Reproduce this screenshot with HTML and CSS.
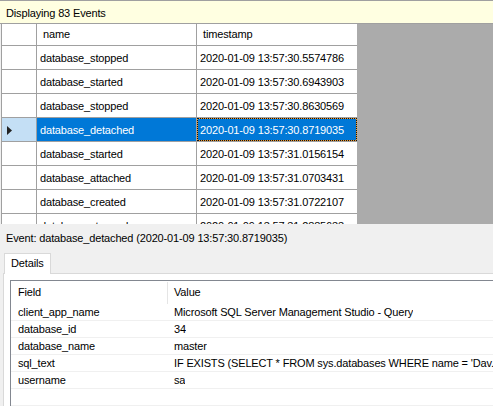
FILE: index.html
```html
<!DOCTYPE html>
<html lang="en">
<head>
    <meta charset="UTF-8">
    <title>Displaying 83 Events</title>
    <link rel="stylesheet" href="styles.css">
</head>
<body>
    <!-- 状态栏 -->
    <div class="status">Displaying 83 Events</div>

    <!-- 事件列表 -->
    <div class="events">
        <div class="row head">
            <div class="rh"></div>
            <div class="c name">name</div>
            <div class="c ts">timestamp</div>
        </div>
        <div class="row">
            <div class="rh"></div>
            <div class="c name">database_stopped</div>
            <div class="c ts">2020-01-09 13:57:30.5574786</div>
        </div>
        <div class="row">
            <div class="rh"></div>
            <div class="c name">database_started</div>
            <div class="c ts">2020-01-09 13:57:30.6943903</div>
        </div>
        <div class="row">
            <div class="rh"></div>
            <div class="c name">database_stopped</div>
            <div class="c ts">2020-01-09 13:57:30.8630569</div>
        </div>
        <div class="row sel">
            <div class="rh">
                <svg class="arrow" width="5" height="9" viewBox="0 0 5 9"><polygon points="0,0 5,4.5 0,9" fill="#222"/></svg>
            </div>
            <div class="c name">database_detached</div>
            <div class="c ts">2020-01-09 13:57:30.8719035</div>
        </div>
        <div class="row">
            <div class="rh"></div>
            <div class="c name">database_started</div>
            <div class="c ts">2020-01-09 13:57:31.0156154</div>
        </div>
        <div class="row">
            <div class="rh"></div>
            <div class="c name">database_attached</div>
            <div class="c ts">2020-01-09 13:57:31.0703431</div>
        </div>
        <div class="row">
            <div class="rh"></div>
            <div class="c name">database_created</div>
            <div class="c ts">2020-01-09 13:57:31.0722107</div>
        </div>
        <div class="row">
            <div class="rh"></div>
            <div class="c name">database_stopped</div>
            <div class="c ts">2020-01-09 13:57:31.2885633</div>
        </div>
    </div>

    <!-- 详情 -->
    <div class="detail">
        <div class="event">Event: database_detached (2020-01-09 13:57:30.8719035)</div>
        <div class="tabs">
            <div class="tab">Details</div>
        </div>
        <div class="tabpage">
            <div class="list">
                <div class="lrow lhead">
                    <div class="f">Field</div>
                    <div class="v">Value</div>
                </div>
                <div class="lrow">
                    <div class="f">client_app_name</div>
                    <div class="v">Microsoft SQL Server Management Studio - Query</div>
                </div>
                <div class="lrow">
                    <div class="f">database_id</div>
                    <div class="v">34</div>
                </div>
                <div class="lrow">
                    <div class="f">database_name</div>
                    <div class="v">master</div>
                </div>
                <div class="lrow">
                    <div class="f">sql_text</div>
                    <div class="v">IF EXISTS (SELECT * FROM sys.databases WHERE name = 'Dav.</div>
                </div>
                <div class="lrow">
                    <div class="f">username</div>
                    <div class="v">sa</div>
                </div>
                <div class="lrow">
                    <div class="f"></div>
                    <div class="v"></div>
                </div>
            </div>
        </div>
    </div>
</body>
</html>
```

FILE: styles.css
```css
*{
    padding: 0;
    margin: 0;
    box-sizing: border-box;
}
body{
    width: 493px;
    height: 406px;
    overflow: hidden;
    background-color: #f0f0f0;
    color: #000;
    font-family: "Liberation Sans", Arial, sans-serif;
    font-size: 11px;
    letter-spacing: -0.15px;
}
.status{
    height: 24px;
    background-color: #ffffe1;
    border-top: 1px solid #a0a0a0;
    border-bottom: 1px solid #a0a0a0;
    padding: 3px 0 0 6px;
    line-height: 19px;
}
.events{
    height: 200px;
    margin-left: 1px;
    border-left: 1px solid #a0a0a0;
    background-color: #ababab;
    overflow: hidden;
}
.row{
    display: flex;
    height: 24px;
}
.rh{
    display: flex;
    align-items: center;
    width: 35px;
    background-color: #fff;
    border-right: 1px solid #a0a0a0;
    border-bottom: 1px solid #a0a0a0;
    padding-left: 5px;
}
.c{
    background-color: #fff;
    border-bottom: 1px solid #a0a0a0;
    padding: 2px 0 0 3px;
    line-height: 21px;
    white-space: nowrap;
    overflow: hidden;
}
.name{
    width: 160px;
    border-right: 1px solid #a0a0a0;
}
.ts{
    width: 160px;
}
.row.head{
    height: 22px;
}
.head .c{
    padding: 0 0 0 6px;
    line-height: 21px;
}
.sel .rh{
    background-color: #c4dff5;
}
.sel .c{
    background-color: #0078d7;
    color: #fff;
}
.sel .ts{
    position: relative;
    box-shadow: inset 0 0 0 1px #f39a2b;
}
.sel .ts::after{
    content: "";
    position: absolute;
    left: 0;
    top: 0;
    right: 0;
    bottom: 0;
    border: 1px dotted #111;
}
.arrow{
    display: block;
    margin-top: 1px;
}
.detail{
    height: 182px;
    overflow: hidden;
}
.event{
    padding: 7px 0 8px 6px;
    line-height: 14px;
    white-space: nowrap;
}
.tabs{
    display: flex;
    padding-left: 4px;
}
.tab{
    position: relative;
    z-index: 1;
    width: 47px;
    height: 21px;
    margin-bottom: -1px;
    border: 1px solid #d9d9d9;
    border-bottom: none;
    background-color: #fff;
    padding-left: 6px;
    line-height: 19px;
}
.tabpage{
    height: 133px;
    margin-left: 3px;
    border-top: 1px solid #d9d9d9;
    border-left: 1px solid #d9d9d9;
    background-color: #fff;
    padding: 6px 0 0 6px;
    overflow: hidden;
}
.list{
    height: 127px;
    border-top: 1px solid #828790;
    border-left: 1px solid #828790;
    overflow: hidden;
}
.lrow{
    display: flex;
    height: 17px;
    padding-top: 1px;
    border-bottom: 1px solid #f0f0f0;
    line-height: 15px;
    white-space: nowrap;
    overflow: hidden;
}
.f{
    flex: none;
    width: 157px;
    padding-left: 7px;
}
.v{
    padding-left: 6px;
    overflow: hidden;
}
.lrow.lhead{
    height: 23px;
    border-bottom: none;
    line-height: 20px;
}
.lhead .f{
    border-right: 1px solid #e5e5e5;
}
```
